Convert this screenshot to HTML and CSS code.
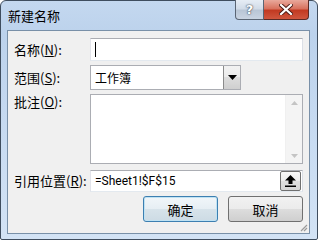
FILE: index.html
```html
<!DOCTYPE html>
<html lang="zh-CN">
<head>
  <meta charset="UTF-8">
  <title>新建名称</title>
  <link rel="stylesheet" href="styles.css">
</head>
<body>
  <div class="ventana">
    <div class="titulo">
      <span class="titulo-texto">新建名称</span>
      <div class="titulo-botones">
        <div class="btn-ayuda">?</div>
        <div class="btn-cerrar">
          <svg width="14" height="11" viewBox="0 0 14 11">
            <path d="M2 1 L12 10 M12 1 L2 10" stroke="#4a1a14" stroke-width="4" stroke-linecap="square"/>
            <path d="M2 1 L12 10 M12 1 L2 10" stroke="#fff" stroke-width="2.2" stroke-linecap="square"/>
          </svg>
        </div>
      </div>
    </div>

    <div class="contenido">
      <div class="fila fila-nombre">
        <label class="etiqueta">名称(<u>N</u>):</label>
        <div class="caja"><span class="cursor"></span></div>
      </div>

      <div class="fila fila-ambito">
        <label class="etiqueta">范围(<u>S</u>):</label>
        <div class="combo">
          <span class="combo-texto">工作簿</span>
          <span class="combo-flecha">
            <svg width="9" height="5" viewBox="0 0 9 5"><path d="M0 0 H9 L4.5 5 Z" fill="#000"/></svg>
          </span>
        </div>
      </div>

      <div class="fila fila-nota">
        <label class="etiqueta">批注(<u>O</u>):</label>
        <div class="area">
          <div class="area-texto"></div>
          <div class="scroll">
            <svg width="7" height="4" viewBox="0 0 7 4"><path d="M0 4 L3.5 0 L7 4 Z" fill="#c4c4c4"/></svg>
            <svg width="7" height="4" viewBox="0 0 7 4"><path d="M0 0 H7 L3.5 4 Z" fill="#c4c4c4"/></svg>
          </div>
        </div>
      </div>

      <div class="fila fila-ref">
        <label class="etiqueta">引用位置(<u>R</u>):</label>
        <div class="caja caja-ref">
          <span class="ref-texto">=Sheet1!$F$15</span>
          <span class="btn-ref">
            <svg width="11" height="12" viewBox="0 0 11 12">
              <path d="M5.5 0 L11 5.5 H7.5 V9 H3.5 V5.5 H0 Z" fill="#000"/>
              <rect x="0" y="10.5" width="11" height="1.5" fill="#000"/>
            </svg>
          </span>
        </div>
      </div>

      <div class="acciones">
        <button class="boton boton-ok">确定</button>
        <button class="boton">取消</button>
      </div>

      <svg class="agarre" width="9" height="9" viewBox="0 0 9 9">
        <path d="M8 2 L2 8 M8 5 L5 8" stroke="#9a9a9a" stroke-width="1.2"/>
      </svg>
    </div>
  </div>
</body>
</html>
```

FILE: styles.css
```css
* { box-sizing: border-box; margin: 0; padding: 0; }
body {
  width: 318px;
  height: 240px;
  overflow: hidden;
  font-family: "Noto Sans CJK SC", "Noto Sans", sans-serif;
  font-size: 13px;
  color: #000;
  background: #fff;
}
.ventana {
  width: 318px;
  height: 240px;
  border: 1px solid #3f4d5e;
  border-radius: 6px 6px 2px 2px;
  background: linear-gradient(180deg, #c4d8ef 0%, #bcd2ec 14%, #c9dcf2 60%, #d3e3f5 100%);
  padding: 0 7px 5px 6px;
  display: flex;
  flex-direction: column;
}
.titulo {
  height: 29px;
  display: flex;
  align-items: flex-start;
  justify-content: space-between;
}
.titulo-texto {
  font-size: 13px;
  line-height: 16px;
  margin-top: 7px;
  padding-left: 1px;
}
.titulo-botones {
  display: flex;
  margin-top: -1px;
  margin-right: 1px;
}
.btn-ayuda {
  width: 29px;
  height: 20px;
  border: 1px solid #5a6574;
  border-top: none;
  border-radius: 0 0 0 4px;
  background: linear-gradient(180deg, #e6edf5 0%, #d2dce8 45%, #b9c6d6 55%, #c9d4e2 100%);
  color: #fff;
  font-family: "DejaVu Sans", sans-serif;
  font-weight: bold;
  font-size: 13px;
  line-height: 19px;
  text-align: center;
  text-shadow: 0 0 2px #3b4656, 0 0 1px #3b4656;
}
.btn-cerrar {
  width: 45px;
  height: 20px;
  border: 1px solid #5b2a25;
  border-top: none;
  border-left: none;
  border-radius: 0 0 4px 0;
  background: linear-gradient(180deg, #e9a99c 0%, #d8725f 45%, #c23a22 55%, #d0563e 100%);
  display: flex;
  align-items: center;
  justify-content: center;
}
.contenido {
  position: relative;
  flex: 1;
  background: #f0f0f0;
  border: 1px solid #7990a8;
  padding: 7px 6px 0 6px;
}
.fila {
  display: flex;
  align-items: center;
}
.etiqueta {
  width: 76px;
  flex-shrink: 0;
  white-space: nowrap;
  line-height: 16px;
}
.caja {
  flex: 1;
  height: 23px;
  background: #fff;
  border: 1px solid #abadb3;
  border-color: #abadb3 #dbdfe6 #e3e9ef #e2e3ea;
  display: flex;
  align-items: center;
}
.cursor {
  width: 1px;
  height: 15px;
  background: #000;
  margin-left: 4px;
}
.fila-ambito { margin-top: 4px; }
.combo {
  width: 151px;
  height: 25px;
  background: #fff;
  border: 1px solid #abadb3;
  display: flex;
  align-items: stretch;
}
.combo-texto {
  flex: 1;
  padding-left: 4px;
  line-height: 23px;
  font-size: 12px;
}
.combo-flecha {
  width: 17px;
  border-left: 1px solid #8b8b8b;
  background: linear-gradient(180deg, #f2f2f2 0%, #ebebeb 50%, #dddddd 50%, #cfcfcf 100%);
  display: flex;
  align-items: center;
  justify-content: center;
}
.fila-nota {
  margin-top: 4px;
  align-items: flex-start;
}
.fila-nota .etiqueta { line-height: 15px; }
.area {
  flex: 1;
  height: 70px;
  background: #fff;
  border: 1px solid #abadb3;
  display: flex;
}
.area-texto { flex: 1; }
.scroll {
  width: 17px;
  background: #f4f4f4;
  border-left: 1px solid #f0f0f0;
  display: flex;
  flex-direction: column;
  justify-content: space-between;
  align-items: center;
  padding: 6px 0 5px;
}
.fila-ref { margin-top: 6px; }
.caja-ref {
  height: 22px;
  justify-content: space-between;
  padding-right: 1px;
}
.ref-texto {
  padding-left: 4px;
  font-family: Roboto, "Noto Sans", sans-serif;
  font-size: 12px;
  line-height: 18px;
}
.btn-ref {
  width: 21px;
  height: 20px;
  border: 1px solid #707070;
  border-radius: 2px;
  background: linear-gradient(180deg, #f8f8f8 0%, #ececec 50%, #dfdfdf 50%, #d6d6d6 100%);
  display: flex;
  align-items: center;
  justify-content: center;
}
.acciones {
  display: flex;
  justify-content: flex-end;
  gap: 10px;
  margin-top: 4px;
}
.boton {
  width: 75px;
  height: 26px;
  border: 1px solid #707070;
  border-radius: 3px;
  background: linear-gradient(180deg, #f2f2f2 0%, #ebebeb 50%, #dddddd 50%, #cfcfcf 100%);
  font-family: "Noto Sans CJK SC", sans-serif;
  font-size: 13px;
  color: #000;
}
.boton-ok {
  border-color: #3c7fb1;
  box-shadow: inset 0 0 0 1px #bfe2f3;
  background: linear-gradient(180deg, #f1f6f9 0%, #e6eef3 50%, #d7e3ea 50%, #cddbe4 100%);
}
.agarre {
  position: absolute;
  right: 1px;
  bottom: 1px;
}
```
